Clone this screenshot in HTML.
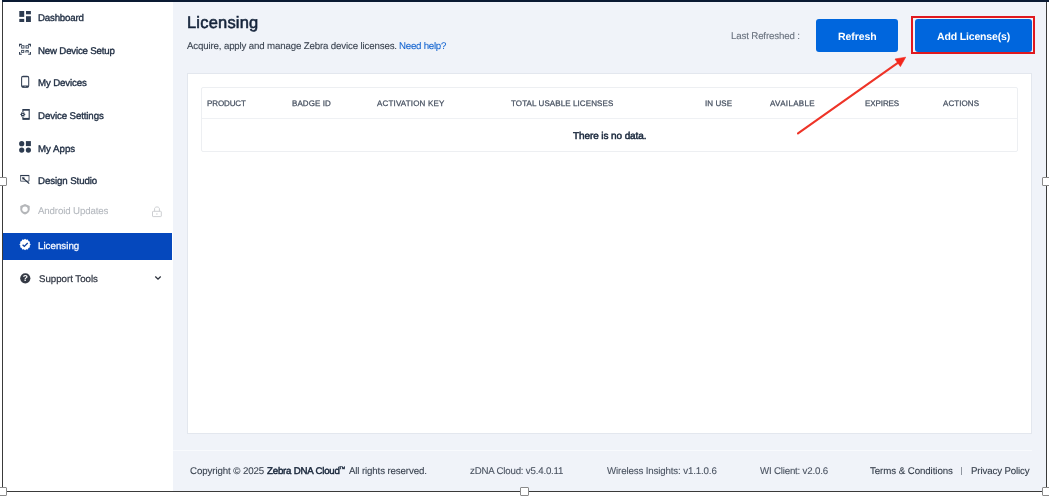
<!DOCTYPE html>
<html><head><meta charset="utf-8">
<style>
*{box-sizing:border-box;margin:0;padding:0}
html,body{width:1049px;height:496px;overflow:hidden;background:#fff}
body{position:relative;font-family:"Liberation Sans",sans-serif;font-size:10px;color:#1d2b40;}
.abs{position:absolute}
.t{position:absolute;white-space:nowrap;line-height:20px;will-change:transform;text-rendering:geometricPrecision}
#main{left:173px;top:2px;width:873px;height:489px;background:#f0f3f9}
#side{left:3px;top:2px;width:169px;height:489px;background:#fff}
.nav{position:absolute;left:37px;white-space:nowrap;line-height:12px;color:#1d2b40}
.ico{position:absolute;left:19px;width:12px;height:12px}
#card{left:187px;top:73px;width:845px;height:361px;background:#fff;border:1px solid #e3e7ee}
#tbl{left:201px;top:87px;width:817px;height:65px;border:1px solid #edeff2;border-radius:2px;background:#fff}
.th{position:absolute;top:97px;font-size:8px;letter-spacing:0.35px;color:#3c4656;white-space:nowrap;line-height:12px}
.btn{position:absolute;background:#0066dd;border-radius:3px;color:#fff;font-weight:700;font-size:10.5px;text-align:center;letter-spacing:-0.3px}
.h{position:absolute;width:8.5px;height:9px;background:#fff;border:1px solid #8a8a8a;border-radius:1px}
</style></head><body>
<div class="abs" id="side"></div>
<div class="abs" id="main"></div>
<!-- frame -->
<div class="abs" style="left:2px;top:0;width:1047px;height:2px;background:#0a1a33"></div>
<div class="abs" style="left:2px;top:2px;width:1px;height:489px;background:#3a3a3a"></div>
<div class="abs" style="left:1046px;top:2px;width:1px;height:489px;background:#3a3a3a"></div>
<div class="abs" style="left:2px;top:491px;width:1045px;height:1px;background:#3a3a3a"></div>
<div class="abs" style="left:1047px;top:2px;width:2px;height:494px;background:#fff"></div>

<!-- sidebar -->
<div class="abs" style="left:3px;top:232.7px;width:169.3px;height:27px;background:#0548bd"></div>


<!-- icons -->
<svg class="abs" style="left:0;top:0;will-change:transform" width="180" height="300" viewBox="0 0 180 300">
<g fill="#2d3b50">
<!-- dashboard -->
<rect x="19.3" y="11" width="4.9" height="5.9"/><rect x="19.3" y="18.9" width="4.9" height="3.1"/>
<rect x="26" y="11" width="4.9" height="3.3"/><rect x="26" y="16.2" width="4.9" height="5.8"/>
<!-- apps -->
<circle cx="21.7" cy="143.7" r="2.6"/><rect x="25.9" y="141.1" width="5" height="5"/>
<circle cx="21.7" cy="150.1" r="2.6"/><circle cx="28.4" cy="150.1" r="2.6"/>
</g>
<!-- new device setup (qr scan) -->
<g fill="none" stroke="#2d3b50" stroke-width="1.1">
<path d="M19.6 46.6V44.4H21.8M28.2 44.4H30.4V46.6M30.4 52V54.2H28.2M21.8 54.2H19.6V52"/>
</g>
<g fill="none" stroke="#3b485b" stroke-width="0.9">
<rect x="21.6" y="45.7" width="2.4" height="2.4"/><rect x="26" y="45.7" width="2.4" height="2.4"/>
<rect x="21.6" y="50.4" width="2.2" height="2"/><path d="M25.8 52.6V50.5H28.4V52.6M27.1 50.5V52.6"/>
</g>
<!-- my devices (phone) -->
<rect x="21.6" y="76.3" width="7.1" height="10.9" rx="1.5" fill="none" stroke="#354256" stroke-width="1.05"/>
<rect x="21.9" y="76.1" width="6.5" height="1.2" rx="0.5" fill="#354256"/><rect x="21.9" y="85.5" width="6.5" height="1.9" rx="0.6" fill="#354256"/>
<rect x="24.4" y="86.2" width="1.5" height="0.5" fill="#c9ced6"/>
<!-- device settings -->
<path d="M22.9 112V109.6H29.2V119.2H22.9V116.8" fill="none" stroke="#2d3b50" stroke-width="1.1"/>
<rect x="22.9" y="109.2" width="6.3" height="1.4" fill="#2d3b50"/><rect x="22.9" y="117.9" width="6.3" height="1.6" fill="#2d3b50"/>
<circle cx="22.8" cy="114.4" r="1.35" fill="none" stroke="#2d3b50" stroke-width="1.3"/>
<path d="M20.3 114.4H25.3M21.6 112.4L24 116.4M24 112.4L21.6 116.4" stroke="#2d3b50" stroke-width="0.9"/>
<circle cx="22.8" cy="114.4" r="0.7" fill="#fff"/>
<!-- design studio -->
<path d="M20.6 175.6H29V181.2H20.6Z" fill="none" stroke="#4a5567" stroke-width="0.9"/>
<path d="M20.3 175.5H29.2" stroke="#2d3b50" stroke-width="1.1"/>
<path d="M22.6 177.6L29.2 183.6" stroke="#1f2c40" stroke-width="1.2"/>
<path d="M22.2 177.2L25 177.8L22.9 179.9Z" fill="#1f2c40"/>
<!-- android updates (shield) -->
<path d="M25 204.1L29.7 205.9V209.3C29.7 211.8 27.7 213.7 25 214.6C22.3 213.7 20.3 211.8 20.3 209.3V205.9Z" fill="#b4b6b9"/>
<circle cx="25" cy="209.2" r="2.7" fill="#fff"/>
<!-- licensing badge -->
<path fill="#fff" d="M25.05 238.80L26.29 239.86L27.90 239.56L28.44 241.11L29.99 241.65L29.69 243.26L30.75 244.50L29.69 245.74L29.99 247.35L28.44 247.89L27.90 249.44L26.29 249.14L25.05 250.20L23.81 249.14L22.20 249.44L21.66 247.89L20.11 247.35L20.41 245.74L19.35 244.50L20.41 243.26L20.11 241.65L21.66 241.11L22.20 239.56L23.81 239.86Z"/>
<path d="M22.6 244.7L24.3 246.4L27.7 243" fill="none" stroke="#0b3f9f" stroke-width="1.3"/>
<!-- help -->
<circle cx="25.3" cy="278.3" r="5.1" fill="#353a45"/>
<text x="25.35" y="281.4" font-family="Liberation Sans" font-size="8.5" font-weight="700" fill="#fff" text-anchor="middle">?</text>
<!-- lock -->
<rect x="152.5" y="211.3" width="8.8" height="5.3" rx="0.6" fill="none" stroke="#cdcfd2" stroke-width="1"/>
<path d="M154.6 211.3V208.6C154.6 206.4 159.4 206.4 159.4 208.6V211.3" fill="none" stroke="#cdcfd2" stroke-width="1"/>
<circle cx="156.9" cy="214" r="0.7" fill="#cdcfd2"/>
<!-- chevron -->
<path d="M155.3 276.5L158 279.2L160.7 276.5" fill="none" stroke="#2a2f3a" stroke-width="1.3"/>
</svg>

<!-- header -->
<div class="btn" style="left:816px;top:19px;width:81.8px;height:32.6px;line-height:33px"></div>
<div class="abs" style="left:911px;top:16px;width:124px;height:38px;border:2px solid #e0191f"></div>
<div class="btn" style="left:914.5px;top:19px;width:117.5px;height:32.6px;line-height:33px"></div>

<!-- card -->
<div class="abs" id="card"></div>
<div class="abs" id="tbl"></div>
<div class="abs" style="left:202px;top:118px;width:815px;height:1px;background:#eff1f4"></div>

<!-- arrow -->
<svg class="abs" style="left:0;top:0" width="1049" height="496" viewBox="0 0 1049 496">
<line x1="798" y1="133.3" x2="898.5" y2="62.3" stroke="#ee3428" stroke-width="2.1" stroke-linecap="round"/>
<polygon points="905.7,57.2 895,59 900.4,66.6" fill="#f3261c" stroke="#f3261c" stroke-width="0.6" stroke-linejoin="round"/>
</svg>

<!-- footer -->
<div class="abs" style="left:173px;top:450px;width:859px;height:1px;background:#f8fafd"></div>

<!-- texts -->
<!--TEXTS-->
<div class="t" style="left:37.85px;top:9px;font-size:9.7px;color:#1f2d42;letter-spacing:-0.200px;-webkit-text-stroke:0.35px #1f2d42">Dashboard</div>
<div class="t" style="left:37.85px;top:42px;font-size:9.7px;color:#1f2d42;letter-spacing:-0.187px;-webkit-text-stroke:0.35px #1f2d42">New Device Setup</div>
<div class="t" style="left:37.75px;top:74px;font-size:9.7px;color:#1f2d42;letter-spacing:-0.144px;-webkit-text-stroke:0.35px #1f2d42">My Devices</div>
<div class="t" style="left:37.85px;top:107px;font-size:9.7px;color:#1f2d42;letter-spacing:-0.111px;-webkit-text-stroke:0.35px #1f2d42">Device Settings</div>
<div class="t" style="left:37.75px;top:140px;font-size:9.7px;color:#1f2d42;letter-spacing:0.000px;-webkit-text-stroke:0.35px #1f2d42">My Apps</div>
<div class="t" style="left:37.85px;top:172px;font-size:9.7px;color:#1f2d42;letter-spacing:-0.094px;-webkit-text-stroke:0.35px #1f2d42">Design Studio</div>
<div class="t" style="left:38.20px;top:202px;font-size:9.7px;color:#b4b8be;letter-spacing:-0.125px;-webkit-text-stroke:0.1px #b4b8be">Android Updates</div>
<div class="t" style="left:37.75px;top:237px;font-size:9.7px;color:#f2f6ff;letter-spacing:0.037px;-webkit-text-stroke:0.3px #f2f6ff">Licensing</div>
<div class="t" style="left:38.80px;top:270px;font-size:9.7px;color:#353b47;letter-spacing:-0.012px;-webkit-text-stroke:0.25px #353b47">Support Tools</div>
<div class="t" style="left:186.62px;top:13px;font-size:16.5px;color:#14233a;letter-spacing:0.194px;-webkit-text-stroke:0.55px #14233a">Licensing</div>
<div class="t" style="left:187.40px;top:37px;font-size:9.7px;color:#3a4350;letter-spacing:-0.149px;-webkit-text-stroke:0.1px #3a4350">Acquire, apply and manage Zebra device licenses.</div>
<div class="t" style="left:399.35px;top:37px;font-size:9.7px;color:#1565d0;letter-spacing:-0.242px;-webkit-text-stroke:0.1px #1565d0">Need help?</div>
<div class="t" style="left:731.35px;top:27px;font-size:9.7px;color:#68717e;letter-spacing:-0.145px;-webkit-text-stroke:0.1px #68717e">Last Refreshed :</div>
<div class="t" style="left:838.25px;top:27px;font-size:10.5px;color:#ffffff;letter-spacing:-0.092px;font-weight:700">Refresh</div>
<div class="t" style="left:937.15px;top:27px;font-size:10.5px;color:#ffffff;letter-spacing:-0.154px;font-weight:700">Add License(s)</div>
<div class="t" style="left:207.28px;top:94px;font-size:8px;color:#475161;letter-spacing:-0.108px;-webkit-text-stroke:0.25px #475161">PRODUCT</div>
<div class="t" style="left:292.27px;top:94px;font-size:8px;color:#475161;letter-spacing:0.093px;-webkit-text-stroke:0.25px #475161">BADGE ID</div>
<div class="t" style="left:377.20px;top:94px;font-size:8px;color:#475161;letter-spacing:0.171px;-webkit-text-stroke:0.25px #475161">ACTIVATION KEY</div>
<div class="t" style="left:511.48px;top:94px;font-size:8px;color:#475161;letter-spacing:0.096px;-webkit-text-stroke:0.25px #475161">TOTAL USABLE LICENSES</div>
<div class="t" style="left:704.65px;top:94px;font-size:8px;color:#475161;letter-spacing:0.075px;-webkit-text-stroke:0.25px #475161">IN USE</div>
<div class="t" style="left:769.90px;top:94px;font-size:8px;color:#475161;letter-spacing:0.334px;-webkit-text-stroke:0.25px #475161">AVAILABLE</div>
<div class="t" style="left:864.67px;top:94px;font-size:8px;color:#475161;letter-spacing:-0.087px;-webkit-text-stroke:0.25px #475161">EXPIRES</div>
<div class="t" style="left:942.60px;top:94px;font-size:8px;color:#475161;letter-spacing:0.079px;-webkit-text-stroke:0.25px #475161">ACTIONS</div>
<div class="t" style="left:573.35px;top:127px;font-size:10px;color:#1c2a3e;letter-spacing:-0.098px;-webkit-text-stroke:0.5px #1c2a3e">There is no data.</div>
<div class="t" style="left:190.00px;top:462px;font-size:9.7px;color:#3a4350;letter-spacing:-0.088px;-webkit-text-stroke:0.1px #3a4350">Copyright © 2025</div>
<div class="t" style="left:266.65px;top:462px;font-size:9.7px;color:#18263a;letter-spacing:-0.214px;-webkit-text-stroke:0.45px #18263a">Zebra DNA Cloud</div>
<div class="t" style="left:338.98px;top:460px;font-size:6.5px;color:#18263a;letter-spacing:0.000px;-webkit-text-stroke:0.3px #18263a">™</div>
<div class="t" style="left:348.60px;top:462px;font-size:9.7px;color:#3a4350;letter-spacing:-0.125px;-webkit-text-stroke:0.1px #3a4350">All rights reserved.</div>
<div class="t" style="left:469.52px;top:462px;font-size:9.7px;color:#4a5361;letter-spacing:-0.190px;-webkit-text-stroke:0.1px #4a5361">zDNA Cloud: v5.4.0.11</div>
<div class="t" style="left:606.77px;top:462px;font-size:9.7px;color:#4a5361;letter-spacing:-0.127px;-webkit-text-stroke:0.1px #4a5361">Wireless Insights: v1.1.0.6</div>
<div class="t" style="left:759.67px;top:462px;font-size:9.7px;color:#4a5361;letter-spacing:-0.188px;-webkit-text-stroke:0.1px #4a5361">WI Client: v2.0.6</div>
<div class="t" style="left:869.95px;top:462px;font-size:9.7px;color:#333c49;letter-spacing:-0.063px;-webkit-text-stroke:0.1px #333c49">Terms &amp; Conditions</div>
<div class="t" style="left:970.65px;top:462px;font-size:9.7px;color:#333c49;letter-spacing:-0.131px;-webkit-text-stroke:0.1px #333c49">Privacy Policy</div>
<!--/TEXTS-->
<div class="abs" style="left:961px;top:466.5px;width:1px;height:8px;background:#9096a0"></div>
<!-- handles -->
<div class="h" style="left:-2px;top:177px"></div>
<div class="h" style="left:1042px;top:177px"></div>
<div class="h" style="left:-2px;top:487px;height:8.5px"></div>
<div class="h" style="left:520px;top:487px;height:8.5px"></div>
<div class="h" style="left:1042.3px;top:487px;height:8.5px"></div>
</body></html>
